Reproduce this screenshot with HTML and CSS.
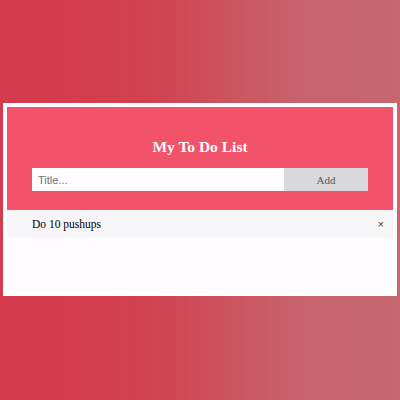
FILE: index.html
```html
<!DOCTYPE html>
<html>
<head>
<meta charset="utf-8">
<link rel="stylesheet" href="styles.css">
</head>
<body>
<div class="card">
  <div class="header">
    <h2 class="title">My To Do List</h2>
    <div class="form">
      <input class="input" type="text" placeholder="Title...">
      <span class="add">Add</span>
    </div>
  </div>
  <ul class="list">
    <li class="item"><span>Do 10 pushups</span><span class="close">×</span></li>
  </ul>
</div>
</body>
</html>
```
FILE: styles.css
```css
html, body {
  margin: 0;
  height: 100%;
}
body {
  background: linear-gradient(to right, #d53a4d 0%, #d2404f 35%, #c7636d 75%, #c5676f 100%);
  font-family: "Liberation Serif", serif;
  padding-top: 103px;
  box-sizing: border-box;
}
.card {
  margin: 0 3px;
  border: 4px solid #ffffff;
  background: #fdfbfe;
  height: 185px;
}
.header {
  background: #f2536a;
  height: 103px;
  box-sizing: border-box;
  padding: 28px 25px 0;
}
.title {
  margin: 0 0 9px;
  text-align: center;
  color: #ffffff;
  font-size: 15.5px;
  font-weight: bold;
  line-height: 24px;
}
.form {
  display: flex;
  height: 23px;
}
.input {
  flex: 1;
  border: none;
  margin: 0;
  padding: 0 6px;
  height: 23px;
  font-family: "Liberation Sans", sans-serif;
  font-size: 11px;
  background: #fffdff;
  outline: none;
}
.input::placeholder {
  color: #6f6f6f;
}
.add {
  width: 84px;
  background: #d9d8da;
  color: #555555;
  font-size: 11px;
  display: flex;
  align-items: center;
  justify-content: center;
}
.list {
  list-style: none;
  margin: 0;
  padding: 0;
}
.item {
  height: 28px;
  background: #f6f5f7;
  display: flex;
  align-items: center;
  justify-content: space-between;
  padding: 0 9px 0 25px;
  font-size: 11.5px;
  color: #000000;
}
.close {
  font-family: "Liberation Sans", sans-serif;
  font-size: 11px;
  color: #444444;
}
```
